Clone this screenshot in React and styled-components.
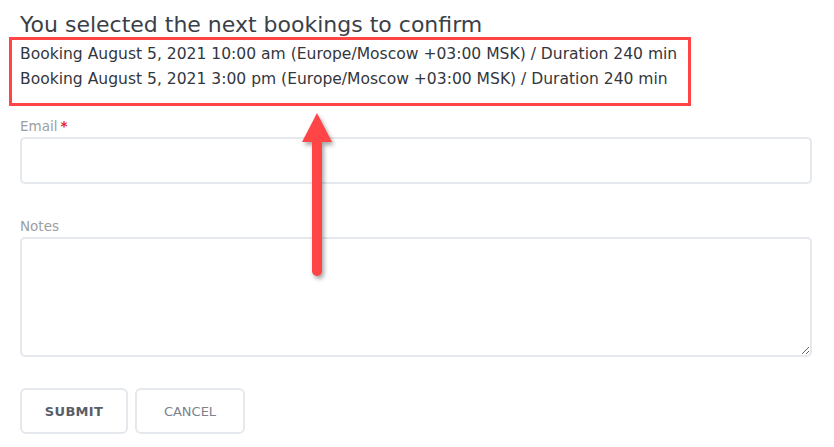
import React from 'react'
import styled, { createGlobalStyle } from 'styled-components'

const GlobalStyle = createGlobalStyle`
    body {
        margin: 0;
        background: #fff;
        font-family: "DejaVu Sans", "Liberation Sans", sans-serif;
    }
`

const Page = styled.div`
    position: relative;
    padding: 11px 22px 0 20px;
`

const Title = styled.h2`
    margin: 0;
    font-size: 22px;
    line-height: 28px;
    font-weight: 400;
    color: #3b3f48;
`

const Selected = styled.div`
    width: fit-content;
    margin: -2px 0 0 -11px;
    padding: 2px 11px 11px 8px;
    border: 3px solid #ff4545;
`

const Booking = styled.div`
    font-size: 15.55px;
    line-height: 25px;
    color: #33363d;
`

const Field = styled.div`
    display: flex;
    flex-direction: column;
    gap: 3px;
    margin-top: ${({ $top }) => $top}px;
`

const Label = styled.label`
    font-size: 13.5px;
    line-height: 16px;
    color: #9b9ea3;
`

const Required = styled.span`
    color: #e3262b;
    margin-left: 3px;
    font-weight: 700;
`

const Input = styled.input`
    box-sizing: border-box;
    width: 100%;
    height: 47px;
    border: 2px solid #e5e8ec;
    border-radius: 5px;
    padding: 0 12px;
    font: inherit;
    &:focus {
        outline: none;
    }
`

const TextArea = styled.textarea`
    box-sizing: border-box;
    width: 100%;
    height: 120px;
    border: 2px solid #e5e8ec;
    border-radius: 5px;
    padding: 10px 12px;
    font: inherit;
    display: block;
    &:focus {
        outline: none;
    }
`

const Buttons = styled.div`
    display: flex;
    gap: 7px;
    margin-top: 31px;
`

const Button = styled.button`
    box-sizing: border-box;
    width: ${({ $width }) => $width}px;
    height: 46px;
    border: 2px solid #e5e8ec;
    border-radius: 6px;
    background: #fff;
    font-family: inherit;
    font-size: 13px;
    font-weight: ${({ $primary }) => ($primary ? 700 : 400)};
    color: ${({ $primary }) => ($primary ? '#585e68' : '#7c828c')};
    letter-spacing: ${({ $primary }) => ($primary ? '0.3px' : '0')};
    cursor: pointer;
`

const Arrow = styled.svg`
    position: absolute;
    left: 298px;
    top: 110px;
    filter: drop-shadow(2px 3px 2px rgba(0, 0, 0, 0.35));
`

const bookings = [
    'Booking August 5, 2021 10:00 am (Europe/Moscow +03:00 MSK) / Duration 240 min',
    'Booking August 5, 2021 3:00 pm (Europe/Moscow +03:00 MSK) / Duration 240 min',
]

const App = () => {
    return (
        <Page>
            <GlobalStyle />
            <Title>You selected the next bookings to confirm</Title>
            <Selected>
                {bookings.map((b) => (
                    <Booking key={b}>{b}</Booking>
                ))}
            </Selected>
            <Field $top={12}>
                <Label>Email<Required>*</Required></Label>
                <Input type="email" />
            </Field>
            <Field $top={34}>
                <Label>Notes</Label>
                <TextArea />
            </Field>
            <Buttons>
                <Button $primary $width={108}>SUBMIT</Button>
                <Button $width={110}>CANCEL</Button>
            </Buttons>
            <Arrow width="40" height="172" viewBox="0 0 40 172">
                <polygon points="19,3 4,32 34,32" fill="#ff4545" />
                <rect x="14" y="28" width="10" height="138" rx="5" fill="#ff4545" />
            </Arrow>
        </Page>
    )
}

export default App
